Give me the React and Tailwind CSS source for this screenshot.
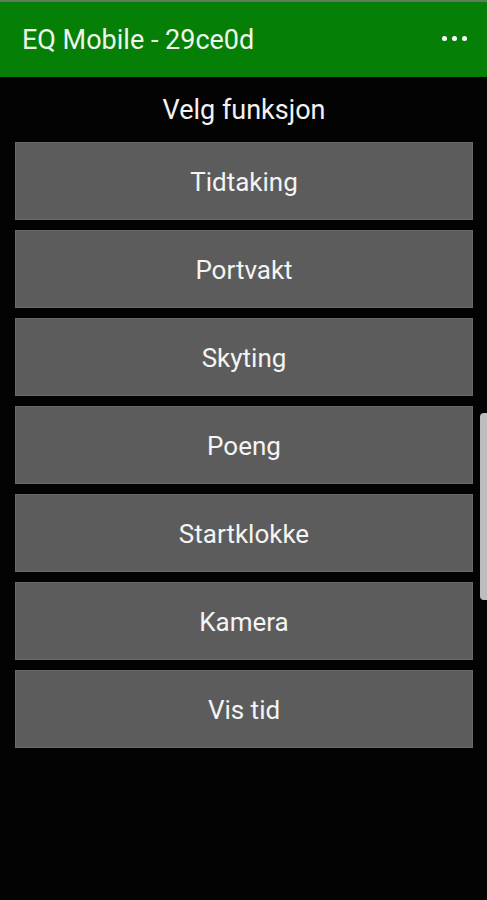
import React from "react";

const functions = [
  "Tidtaking",
  "Portvakt",
  "Skyting",
  "Poeng",
  "Startklokke",
  "Kamera",
  "Vis tid",
];

const App = () => {
  return (
    <div
      className="relative w-[487px] h-[900px] bg-[#030303] overflow-hidden"
      style={{ fontFamily: "Roboto, 'Noto Sans', sans-serif" }}
    >
      {/* status strip + app bar */}
      <div className="h-[2px] bg-[#5f7d5c]" />
      <header className="h-[75px] bg-[#067f06] flex items-center justify-between pl-[22px] pr-[20px]">
        <h1 className="text-[27px] text-[#eef6ec] mt-[2px]">EQ Mobile - 29ce0d</h1>
        <div className="flex gap-[5px] items-center mb-[2px]">
          <span className="w-[5px] h-[5px] rounded-full bg-white" />
          <span className="w-[5px] h-[5px] rounded-full bg-white" />
          <span className="w-[5px] h-[5px] rounded-full bg-white" />
        </div>
      </header>

      <main className="px-[15px] pr-[14px]">
        <p className="text-center text-[27px] text-[#f2f2f2] h-[65px] leading-[66px]">
          Velg funksjon
        </p>
        <div className="flex flex-col gap-[10px]">
          {functions.map((name) => (
            <button
              key={name}
              className="h-[78px] w-full bg-[#5c5c5c] border border-[#676767] text-[26px] text-[#f4f4f4] pt-[2px]"
            >
              {name}
            </button>
          ))}
        </div>
      </main>

      {/* scroll indicator */}
      <div className="absolute right-0 top-[413px] w-[7px] h-[187px] bg-[#bdbdbd] rounded-l-[4px]" />
    </div>
  );
};

export default App;
